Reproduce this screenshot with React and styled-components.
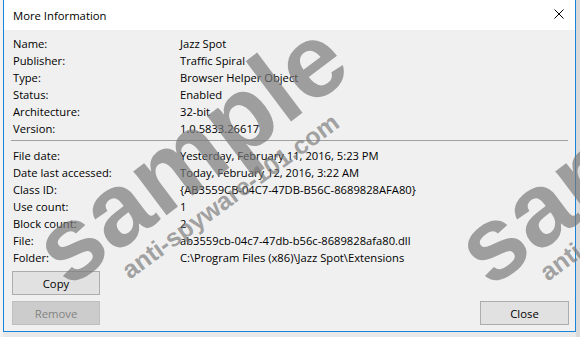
import React from 'react';
import styled, { createGlobalStyle } from 'styled-components';

const GlobalStyle = createGlobalStyle`
	html, body {
		margin: 0;
		padding: 0;
		background: #e9e9e9;
		overflow: hidden;
	}
	body {
		font-family: 'Open Sans', 'Noto Sans', sans-serif;
		font-size: 11.2px;
		color: #000;
	}
`;

// the page behind the dialog
const Desktop = styled.div`
	position: relative;
	width: 580px;
	height: 337px;
	overflow: hidden;
	display: flex;
	background: linear-gradient(to right, #f3f3f3 0 3px, transparent 3px, transparent 576px, #dadada 576px);
`;

const Dialog = styled.div`
	margin: 0 4px 5px 3px;
	width: 573px;
	height: 332px;
	box-sizing: border-box;
	border: 1px solid #1883d7;
	border-top: none;
	background: #f0f0f0;
	display: flex;
	flex-direction: column;
`;

const TitleBar = styled.div`
	height: 30px;
	flex: 0 0 30px;
	background: #fff;
	display: flex;
	align-items: center;
	justify-content: space-between;
	padding: 0 11px 0 9px;
	font-size: 11.3px;
`;

const CloseX = styled.div`
	width: 10px;
	height: 10px;
	margin-top: -2px;
	display: flex;
`;

const Body = styled.div`
	flex: 1;
	display: flex;
	flex-direction: column;
	padding: 5px 6px 6px 8px;
`;

const Grid = styled.div`
	display: grid;
	grid-template-columns: 167px 1fr;
	grid-auto-rows: 17px;
	align-items: center;
	padding-left: 1px;
`;

const Label = styled.div`
	white-space: nowrap;
`;

const Value = styled.div`
	white-space: nowrap;
`;

const Divider = styled.hr`
	border: none;
	border-top: 1px solid #a0a0a0;
	margin: 3px 1px 6px -1px;
	height: 0;
`;

const Footer = styled.div`
	margin-top: auto;
	display: flex;
	justify-content: space-between;
	align-items: flex-end;
`;

const ButtonStack = styled.div`
	display: flex;
	flex-direction: column;
	gap: 6px;
`;

const Button = styled.button`
	width: ${({ $w }) => $w || 88}px;
	height: 24px;
	box-sizing: border-box;
	font-family: inherit;
	font-size: 11.3px;
	padding: 0;
	border: 1px solid ${({ disabled }) => (disabled ? '#bfbfbf' : '#adadad')};
	background: ${({ disabled }) => (disabled ? '#cccccc' : '#e1e1e1')};
	color: ${({ disabled }) => (disabled ? '#838383' : '#000')};
`;

// watermark lying over the dialog
const Watermark = styled.div`
	position: absolute;
	left: ${({ $x }) => $x}px;
	top: ${({ $y }) => $y}px;
	transform: rotate(${({ $deg }) => $deg}deg);
	transform-origin: left bottom;
	font-family: 'Liberation Sans', Arial, sans-serif;
	font-weight: bold;
	font-size: ${({ $size }) => $size}px;
	line-height: 1;
	white-space: nowrap;
	color: rgba(120, 120, 120, 0.68);
	pointer-events: none;
`;

const top = [
	['Name:', 'Jazz Spot'],
	['Publisher:', 'Traffic Spiral'],
	['Type:', 'Browser Helper Object'],
	['Status:', 'Enabled'],
	['Architecture:', '32-bit'],
	['Version:', '1.0.5833.26617'],
];

const bottom = [
	['File date:', 'Yesterday, February 11, 2016, 5:23 PM'],
	['Date last accessed:', 'Today, February 12, 2016, 3:22 AM'],
	['Class ID:', '{AB3559CB-04C7-47DB-B56C-8689828AFA80}'],
	['Use count:', '1'],
	['Block count:', '2'],
	['File:', 'ab3559cb-04c7-47db-b56c-8689828afa80.dll'],
	['Folder:', 'C:\\Program Files (x86)\\Jazz Spot\\Extensions'],
];

const Rows = ({ items }) => (
	<Grid>
		{items.map(([k, v]) => (
			<React.Fragment key={k}>
				<Label>{k}</Label>
				<Value>{v}</Value>
			</React.Fragment>
		))}
	</Grid>
);

export default function App() {
	return (
		<>
			<GlobalStyle />
			<Desktop>
				<Dialog>
					<TitleBar>
						<span>More Information</span>
						<CloseX>
							<svg width='10' height='10' viewBox='0 0 10 10'>
								<path d='M0.5 0.5 L9.5 9.5 M9.5 0.5 L0.5 9.5' stroke='#000' strokeWidth='1' />
							</svg>
						</CloseX>
					</TitleBar>
					<Body>
						<Rows items={top} />
						<Divider />
						<Rows items={bottom} />
						<Footer>
							<ButtonStack>
								<Button>Copy</Button>
								<Button disabled>Remove</Button>
							</ButtonStack>
							<Button $w={89}>Close</Button>
						</Footer>
					</Body>
				</Dialog>
				<Watermark $x={78} $y={198} $size={104} $deg={-37}>sample</Watermark>
				<Watermark $x={132} $y={258} $size={25} $deg={-36}>anti-spyware-101.com</Watermark>
				<Watermark $x={500} $y={198} $size={104} $deg={-37}>sample</Watermark>
				<Watermark $x={550} $y={260} $size={25} $deg={-36}>anti-spyware-101.com</Watermark>
			</Desktop>
		</>
	);
}
